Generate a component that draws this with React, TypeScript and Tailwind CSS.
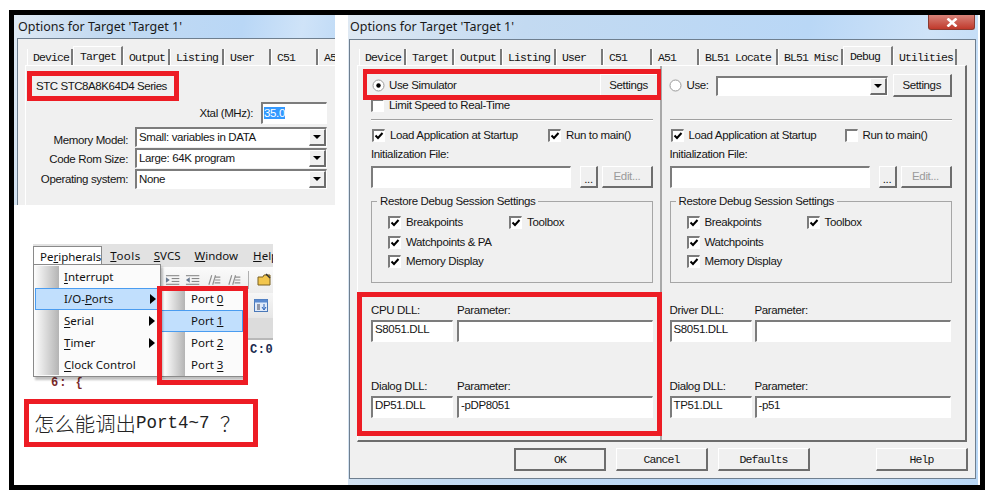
import React from "react";

const uiBase = "font-['Liberation_Sans',Arial,sans-serif] text-[11.5px] leading-[13px] tracking-[-0.36px] whitespace-nowrap";
const ui = `${uiBase} text-[#151515]`;
const mono = "font-['Liberation_Mono',monospace] text-[11.5px] leading-[13px] tracking-[-0.9px] text-[#151515] whitespace-nowrap";
const menuFont = "font-['Noto_Sans',sans-serif] text-[11.5px] leading-[16px] text-[#111] whitespace-nowrap";
const raised = "border-t border-l border-r-2 border-b-2 border-t-white border-l-white border-r-[#6d6d6d] border-b-[#6d6d6d] bg-[#f0f0f0]";
const sunken = "border-t-2 border-l-2 border-r border-b border-t-[#7c7c7c] border-l-[#7c7c7c] border-r-white border-b-white bg-white";
const titleBg = "bg-[linear-gradient(100deg,#dfe9f3_0%,#c3daf1_25%,#b9d7f6_65%,#cfe3f8_82%,#b7d6f5_100%)]";

function Check({ on = true }: { on?: boolean }) {
  return (
    <span className={`${sunken} block w-[13px] h-[13px] shrink-0`}>
      {on && (
        <svg viewBox="0 0 10 10" className="block w-[10px] h-[10px]">
          <path d="M1.5 4.5 L4 7 L8.5 2" fill="none" stroke="#000" strokeWidth="2" />
        </svg>
      )}
    </span>
  );
}

function CheckRow({ label, on = true, width }: { label: string; on?: boolean; width?: string }) {
  return (
    <div className={`flex items-center gap-[5px] h-[13px] ${width ?? ""}`}>
      <Check on={on} />
      <span className={ui}>{label}</span>
    </div>
  );
}

function Radio({ on }: { on: boolean }) {
  return (
    <svg viewBox="0 0 13 13" className="w-[13px] h-[13px] shrink-0">
      <circle cx="6.5" cy="6.5" r="5.5" fill="#fff" stroke="#9a9a9a" />
      {on && <circle cx="6.5" cy="6.5" r="2.2" fill="#000" />}
    </svg>
  );
}

function Arrow() {
  return (
    <span className={`${raised} flex items-center justify-center w-[17px] h-full shrink-0`}>
      <svg viewBox="0 0 8 4" className="w-[8px] h-[4px]"><path d="M0 0H8L4 4Z" fill="#000" /></svg>
    </span>
  );
}

function Combo({ text, width, height }: { text: string; width: string; height: string }) {
  return (
    <div className={`${sunken} ${width} ${height} flex items-center justify-between`}>
      <span className={`${ui} pl-[2px]`}>{text}</span>
      <Arrow />
    </div>
  );
}

function Tabs({ items, active, offset }: { items: [string, string][]; active: string; offset: string }) {
  return (
    <div className={`flex items-end h-[19px] ${offset}`}>
      {items.map(([t, w]) => (
        <div
          key={t}
          className={`${w} shrink-0 border-l border-white border-r-2 border-r-[#7a7a7a] ${mono} ${
            t === active ? "h-[19px] pl-[6px] pt-[3px] border-t bg-[#f0f0f0]" : "h-[16px] pl-[5px] pt-[2px] bg-[#f0f0f0]"
          }`}
        >
          {t}
        </div>
      ))}
    </div>
  );
}

function Field({ label, value, width }: { label: string; value: string; width: string }) {
  return (
    <div className={width}>
      <div className={`${ui} h-[13px]`}>{label}</div>
      <div className={`${sunken} mt-[3px] h-[22px] ${ui} pl-[2px] pt-[1px]`}>{value}</div>
    </div>
  );
}

function DebugColumn(p: {
  width: string;
  pad: string;
  first: React.ReactNode;
  limit: boolean;
  run: boolean;
  runWidth: string;
  toolWidth: string;
  watch: string;
  dll: string;
  dllValue: string;
  dlgValue: string;
  dlgParam: string;
  gap: string;
  border: string;
}) {
  return (
    <div className={`${p.width} ${p.pad} ${p.border} h-full`}>
      <div className="mt-[8px] h-[23px] flex items-center">{p.first}</div>
      <div className="mt-[2px] h-[13px]">{p.limit && <CheckRow label="Limit Speed to Real-Time" on={false} />}</div>
      <div className="mt-[7px] h-[2px] w-[282px] border-t border-b border-t-[#a0a0a0] border-b-white" />
      <div className="mt-[8px] flex pl-[1px]">
        <CheckRow label="Load Application at Startup" width={p.runWidth} />
        <CheckRow label="Run to main()" on={p.run} />
      </div>
      <div className={`${ui} mt-[6px] h-[13px]`}>Initialization File:</div>
      <div className="mt-[5px] flex h-[22px] w-[282px]">
        <div className={`${sunken} w-[200px]`} />
        <button className={`${raised} ml-[9px] w-[18px] ${ui} pt-[5px]`}>...</button>
        <button className={`${raised} ml-[4px] flex-1 ${uiBase} text-[#9a9a9a]`}>Edit...</button>
      </div>
      <fieldset className="mt-[7px] w-[282px] h-[88px] border border-[#a6a6a6]">
        <legend className={`${ui} ml-[5px] px-[3px] h-[13px]`}>Restore Debug Session Settings</legend>
        <div className="flex mt-[8px] pl-[16px]">
          <CheckRow label="Breakpoints" width={p.toolWidth} />
          <CheckRow label="Toolbox" />
        </div>
        <div className="mt-[7px] pl-[16px]"><CheckRow label={p.watch} /></div>
        <div className="mt-[6px] pl-[16px]"><CheckRow label="Memory Display" /></div>
      </fieldset>
      <div className={`mt-[21px] flex ${p.gap}`}>
        <Field label={p.dll} value={p.dllValue} width="w-[82px]" />
        <Field label="Parameter:" value="" width="w-[196px]" />
      </div>
      <div className={`mt-[38px] flex ${p.gap}`}>
        <Field label="Dialog DLL:" value={p.dlgValue} width="w-[82px]" />
        <Field label="Parameter:" value={p.dlgParam} width="w-[196px]" />
      </div>
    </div>
  );
}

function MenuItem({ before, u, after, arrow, width }: { before?: string; u: string; after?: string; arrow?: boolean; width: string }) {
  return (
    <div className={`relative h-[22px] ${width} flex items-center`}>
      <span className={menuFont}>
        {before}<u className="underline-offset-2">{u}</u>{after}
      </span>
      {arrow && (
        <svg viewBox="0 0 6 10" className="absolute right-[5px] top-[6px] w-[6px] h-[10px]"><path d="M0 0L6 5L0 10Z" fill="#000" /></svg>
      )}
    </div>
  );
}

function Indent({ flip }: { flip?: boolean }) {
  return (
    <svg viewBox="0 0 16 14" className="w-[16px] h-[14px]">
      <g stroke="#7a7a7a" strokeWidth="1">
        <path d="M1 2.5H15M7 5.5H15M7 8.5H15M1 11.5H15" />
      </g>
      <path d={flip ? "M5 4V10L1 7Z" : "M1 4V10L5 7Z"} fill="#6a7a90" />
    </svg>
  );
}

function Slash() {
  return (
    <svg viewBox="0 0 16 14" className="w-[16px] h-[14px]">
      <path d="M3 12L6 2M7 12L10 2M10 4H15M9.5 7H15M9 10H15" stroke="#8f8f8f" strokeWidth="1.2" fill="none" />
    </svg>
  );
}

function MenuShot() {
  return (
    <div className="relative ml-[19px] mt-[39px] w-[240px] h-[146px] overflow-hidden bg-white">
      <div className={`h-[23px] bg-[#e2e2e2] flex items-center ${menuFont}`}>
        <span className="w-[71px] h-[21px] mt-[1px] bg-white border border-[#8a8a8a] border-b-0 pl-[6px] flex items-center">Pe<u>r</u>ipherals</span>
        <span className="ml-[8px] tracking-[0.5px]"><u>T</u>ools</span>
        <span className="ml-[13px]"><u>S</u>VCS</span>
        <span className="ml-[14px]"><u>W</u>indow</span>
        <span className="ml-[15px]"><u>H</u>elp</span>
      </div>
      <div className="h-[26px] bg-[linear-gradient(#fbfbfb,#ececec)] flex items-center pl-[132px] gap-[5px]">
        <Indent />
        <Indent flip />
        <Slash />
        <Slash />
        <span className="ml-[2px] w-px h-[18px] bg-[#b0b0b0]" />
        <svg viewBox="0 0 16 14" className="ml-[3px] w-[16px] h-[14px] shrink-0">
          <path d="M1 4H6L7 2H13V12H1Z" fill="#f2c64e" stroke="#7a6020" />
          <path d="M9 1L13 5" stroke="#333" strokeWidth="1.5" />
        </svg>
      </div>
      <div className="h-[25px] bg-[linear-gradient(#f6f6f6,#e6e6e6)] flex items-center pl-[221px]">
        <svg viewBox="0 0 14 13" className="w-[14px] h-[13px]">
          <rect x="0.5" y="0.5" width="13" height="12" fill="#dfeafa" stroke="#4a78b8" />
          <rect x="0.5" y="0.5" width="13" height="3" fill="#5a8ad0" />
          <path d="M3 6H6M3 8H6M3 10H6" stroke="#445" />
          <path d="M10 5V10M8 8L10 11L12 8" stroke="#2a62b8" fill="none" />
        </svg>
      </div>
      <div className="h-[22px] bg-[#dcdcdc] border-b-2 border-b-[#b8b8b8]" />
      <div className="h-[14px] mt-[3px] pl-[217px] font-['Liberation_Mono',monospace] text-[12px] leading-[14px] font-bold text-[#1a2a50] tracking-[0.6px]">C:0</div>
      <div className="mt-[19px] pl-[18px] font-['Liberation_Mono',monospace] text-[12px] leading-[14px] font-bold text-[#7a2a2a] tracking-[1px] whitespace-pre">6: {"{"}</div>

      <div className="absolute left-[127px] top-[44px] w-[84px] h-[89px] bg-[#fbfbfb] shadow-[2px_3px_2px_rgba(0,0,0,0.25)] border-b border-r border-[#8a8a8a] pl-[2px]">
        <div className="absolute left-[5px] top-0 bottom-0 w-[20px] bg-[linear-gradient(90deg,#fbfbfb,#b4b4b4)]" />
        <div className="relative pl-[29px]">
          <MenuItem before="Port " u="0" width="w-full" />
        </div>
        <div className="relative -ml-[1px]"><div className="pl-[29px] bg-[#c1dffd] border border-[#4a9cf0] h-[22px] flex items-center"><span className={menuFont}>Port <u>1</u></span></div></div>
        <div className="relative pl-[29px]"><MenuItem before="Port " u="2" width="w-full" /></div>
        <div className="relative pl-[29px]"><MenuItem before="Port " u="3" width="w-full" /></div>
      </div>

      <div className="absolute left-0 top-[20px] w-[128px] h-[113px] bg-[#fbfbfb] border border-[#8a8a8a] pl-[1px] pt-[1px] shadow-[2px_3px_2px_rgba(0,0,0,0.25)]">
        <div className="absolute left-[1px] top-[1px] bottom-[1px] w-[24px] bg-[linear-gradient(90deg,#fbfbfb,#b4b4b4)]" />
        <div className="relative pl-[29px]"><MenuItem u="I" after="nterrupt" width="w-full" /></div>
        <div className="relative"><div className="relative h-[22px] bg-[#c1dffd] border border-[#4a9cf0] pl-[28px] flex items-center"><span className={menuFont}>I/O-<u>P</u>orts</span><svg viewBox="0 0 6 10" className="absolute right-[3px] top-[5px] w-[6px] h-[10px]"><path d="M0 0L6 5L0 10Z" fill="#000" /></svg></div></div>
        <div className="relative pl-[29px]"><MenuItem u="S" after="erial" arrow width="w-full" /></div>
        <div className="relative pl-[29px]"><MenuItem u="T" after="imer" arrow width="w-full" /></div>
        <div className="relative pl-[29px]"><MenuItem u="C" after="lock Control" width="w-full" /></div>
      </div>
    </div>
  );
}

function LeftLabel({ text, lift, children }: { text: string; lift: string; children: React.ReactNode }) {
  return (
    <div className="flex items-center">
      <span className={`${ui} w-[102px] text-right tracking-[-0.6px] ${lift}`}>{text}</span>
      <span className="w-[7px]" />
      {children}
    </div>
  );
}

export default function App() {
  const leftTabs: [string, string][] = [["Device", "w-[46px]"], ["Target", "w-[50px]"], ["Output", "w-[47px]"], ["Listing", "w-[54px]"], ["User", "w-[47px]"], ["C51", "w-[47px]"], ["A51", "w-[47px]"]];
  const rightTabs: [string, string][] = [["Device", "w-[47px]"], ["Target", "w-[48px]"], ["Output", "w-[48px]"], ["Listing", "w-[54px]"], ["User", "w-[47px]"], ["C51", "w-[49px]"], ["A51", "w-[47px]"], ["BL51 Locate", "w-[79px]"], ["BL51 Misc", "w-[65px]"], ["Debug", "w-[50px]"], ["Utilities", "w-[64px]"]];
  const title = "font-['Noto_Sans',sans-serif] text-[12.5px] leading-[23px] text-[#1a1a1a] whitespace-nowrap";
  return (
    <div className="relative w-[998px] h-[500px] bg-white overflow-hidden pt-[10px] pl-[9px]">
      <div className="w-[976px] h-[480px] border-[5px] border-black flex">
        <div className="w-[321px] shrink-0">
          <div className={`h-[190px] overflow-hidden ${titleBg}`}>
            <div className={`${title} h-[23px] pl-[4px]`}>Options for Target 'Target 1'</div>
            <div className="ml-[3px] h-[167px] border-l border-t border-[#6f7f8f] bg-[#f0f0f0] pl-[7px] overflow-hidden">
              <div className="mt-[7px]">
                <Tabs items={leftTabs} active="Target" offset="pl-[2px]" />
              </div>
              <div className="h-[140px] border-t border-l border-white">
                <div className={`${ui} mt-[14px] pl-[10px] tracking-[-0.44px]`}>STC STC8A8K64D4 Series</div>
                <div className="mt-[9px] flex justify-end items-center w-[301px]">
                  <span className={`${ui} mr-[8px]`}>Xtal (MHz):</span>
                  <div className={`${sunken} w-[66px] h-[22px] pl-[1px] pt-[1px] leading-[13px]`}>
                    <span className={`${uiBase} text-white bg-[#3399ff]`}>35.0</span>
                  </div>
                </div>
                <div className="mt-[3px]"><LeftLabel text="Memory Model:" lift="translate-y-[3px]"><Combo text="Small: variables in DATA" width="w-[192px]" height="h-[20px]" /></LeftLabel></div>
                <div className="mt-[1px]"><LeftLabel text="Code Rom Size:" lift="translate-y-[1px]"><Combo text="Large: 64K program" width="w-[192px]" height="h-[20px]" /></LeftLabel></div>
                <div className="mt-[1px]"><LeftLabel text="Operating system:" lift=""><Combo text="None" width="w-[192px]" height="h-[20px]" /></LeftLabel></div>
              </div>
            </div>
          </div>
          <MenuShot />
          <div className="ml-[10px] mt-[9px] w-[234px] h-[48px] border-[5px] border-[#ed1c24] pl-[5px] flex items-center font-['Liberation_Mono','Noto_Sans_CJK_SC',serif] text-[17.5px] text-[#222] whitespace-pre">
            <span className="text-[20.4px] font-['Noto_Sans_CJK_SC',serif] font-light">怎么能调出</span>Port4~7 <span className="text-[20.4px] font-['Noto_Sans_CJK_SC',serif] font-light">？</span>
          </div>
        </div>

        <div className={`ml-[13px] w-[630px] h-[470px] ${titleBg} relative`}>
          <div className={`${title} h-[24px] pl-[2px]`}>Options for Target 'Target 1'</div>
          <div className="absolute right-[3px] top-0 w-[47px] h-[15px] rounded-b-[3px] bg-[linear-gradient(#d8837a,#c0392b)] border border-[#8a3a30] border-t-0 flex items-center justify-center">
            <svg viewBox="0 0 12 9" className="w-[12px] h-[9px]"><path d="M1.5 0.5L10.5 8.5M10.5 0.5L1.5 8.5" stroke="#fff" strokeWidth="2.6" /></svg>
          </div>
          <div className="ml-[1px] w-[627px] h-[440px] border border-[#6f7f8f] bg-[#f0f0f0] pl-[7px]">
            <div className="mt-[6px]">
              <Tabs items={rightTabs} active="Debug" offset="pl-[2px]" />
            </div>
            <div className="w-[610px] h-[377px] flex border-t border-l border-white border-r-2 border-b-2 border-r-[#6d6d6d] border-b-[#6d6d6d]">
              <DebugColumn
                width="w-[304px]"
                pad="pl-[13px]"
                border="border-r-2 border-r-[#a8a8a8]"
                first={
                  <>
                    <span className="ml-[1px]"><Radio on /></span>
                    <span className={`${ui} ml-[4px]`}>Use Simulator</span>
                    <button className={`${raised} ml-[143px] w-[59px] h-[23px] ${ui}`}>Settings</button>
                  </>
                }
                limit
                run
                runWidth="w-[176px]"
                toolWidth="w-[121px]"
                watch="Watchpoints & PA"
                dll="CPU DLL:"
                dllValue="S8051.DLL"
                dlgValue="DP51.DLL"
                dlgParam="-pDP8051"
                gap="gap-[4px]"
              />
              <DebugColumn
                width="w-[304px]"
                pad="pl-[8px]"
                border=""
                first={
                  <>
                    <span className="ml-[-1px]"><Radio on={false} /></span>
                    <span className={`${ui} ml-[5px]`}>Use:</span>
                    <div className="ml-[7px]"><Combo text="" width="w-[172px]" height="h-[20px]" /></div>
                    <button className={`${raised} ml-[5px] w-[59px] h-[23px] ${ui}`}>Settings</button>
                  </>
                }
                limit={false}
                run={false}
                runWidth="w-[174px]"
                toolWidth="w-[120px]"
                watch="Watchpoints"
                dll="Driver DLL:"
                dllValue="S8051.DLL"
                dlgValue="TP51.DLL"
                dlgParam="-p51"
                gap="gap-[3px]"
              />
            </div>
            <div className="mt-[6px] flex pl-[157px]">
              <button className={`w-[92px] h-[23px] ${mono} border-2 border-[#6d6d6d] bg-[#f0f0f0]`}>OK</button>
              <button className={`${raised} ml-[10px] w-[92px] h-[23px] ${mono}`}>Cancel</button>
              <button className={`${raised} ml-[10px] w-[92px] h-[23px] ${mono}`}>Defaults</button>
              <button className={`${raised} ml-[66px] w-[92px] h-[23px] ${mono}`}>Help</button>
            </div>
          </div>
        </div>
      </div>

      <div className="absolute left-[27px] top-[71px] w-[152px] h-[30px] border-[5px] border-[#ed1c24]" />
      <div className="absolute left-[157px] top-[286px] w-[91px] h-[99px] border-[5px] border-[#ed1c24]" />
      <div className="absolute left-[363px] top-[69px] w-[298px] h-[31px] border-[5px] border-x-[4px] border-[#ed1c24]" />
      <div className="absolute left-[357px] top-[292px] w-[305px] h-[144px] border-[5px] border-[#ed1c24]" />
    </div>
  );
}
